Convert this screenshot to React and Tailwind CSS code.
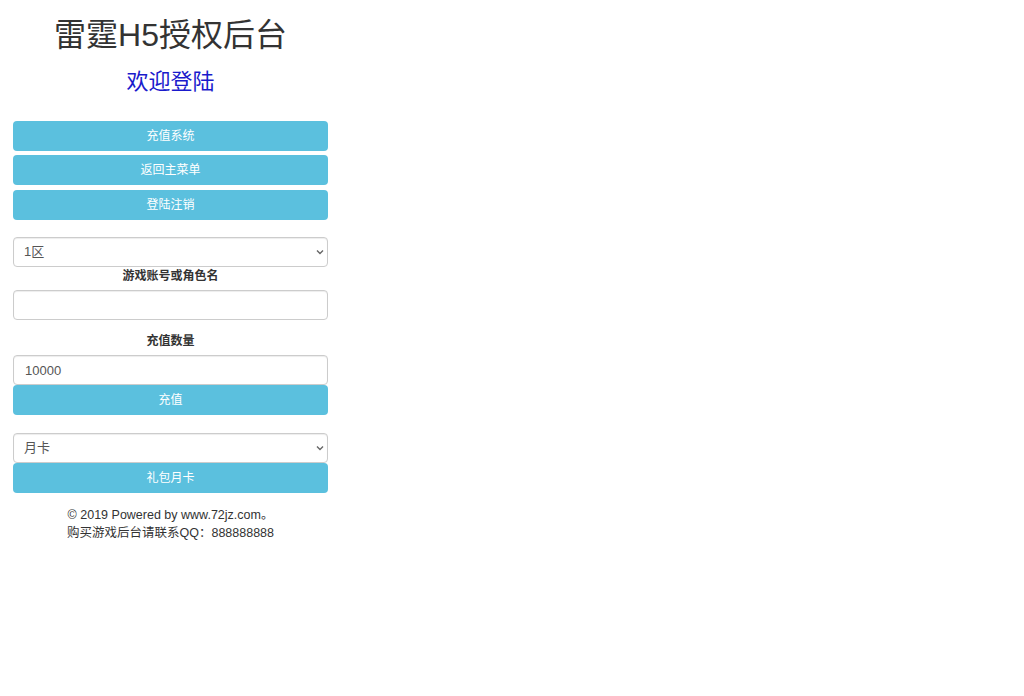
import React from 'react';

const font = { fontFamily: '"Liberation Sans", "Noto Sans CJK SC", sans-serif' };

function Btn({ children, className = '' }) {
  return (
    <button
      type="button"
      className={`block w-full h-[30px] rounded-[4px] bg-[#5bc0de] text-white text-[12px] leading-[30px] text-center ${className}`}
    >
      {children}
    </button>
  );
}

function Select({ value, options, className = '' }) {
  return (
    <div className={`relative ${className}`}>
      <select
        defaultValue={value}
        className="block w-full h-[30px] appearance-none rounded-[4px] border border-[#ccc] bg-white pl-[10px] pr-6 text-[13px] text-[#555] shadow-[inset_0_1px_1px_rgba(0,0,0,0.075)] outline-none"
      >
        {options.map((o) => (
          <option key={o}>{o}</option>
        ))}
      </select>
      <svg
        className="pointer-events-none absolute right-[4px] top-[12px] w-[8px] h-[6px]"
        viewBox="0 0 8 6"
        fill="none"
        stroke="#666"
        strokeWidth="1.4"
      >
        <path d="M1 1.5l3 3 3-3" />
      </svg>
    </div>
  );
}

export default function App() {
  return (
    <div className="w-full min-h-[696px] bg-white" style={font}>
      <div className="w-[341px] px-[13px]">
        <h1 className="mt-[15px] text-center text-[32px] leading-[40px] text-[#333]">雷霆H5授权后台</h1>
        <h3 className="mt-[15px] text-center text-[22px] leading-[24px] text-[#1a1acc]">欢迎登陆</h3>

        <div className="mt-[27px]">
          <Btn>充值系统</Btn>
          <Btn className="mt-[4px]">返回主菜单</Btn>
          <Btn className="mt-[5px]">登陆注销</Btn>
        </div>

        <Select value="1区" options={['1区', '2区', '3区']} className="mt-[17px]" />
        <div className="text-center text-[12px] leading-[18px] font-bold text-[#333]">游戏账号或角色名</div>
        <input
          type="text"
          className="mt-[5px] block w-full h-[30px] rounded-[4px] border border-[#ccc] px-[10px] text-[13px] text-[#555] shadow-[inset_0_1px_1px_rgba(0,0,0,0.075)] outline-none"
        />

        <div className="mt-[12px] text-center text-[12px] leading-[18px] font-bold text-[#333]">充值数量</div>
        <input
          type="text"
          defaultValue="10000"
          className="mt-[5px] block w-full h-[30px] rounded-[4px] border border-[#ccc] px-[11px] text-[13px] text-[#555] shadow-[inset_0_1px_1px_rgba(0,0,0,0.075)] outline-none"
        />
        <Btn>充值</Btn>

        <Select value="月卡" options={['月卡', '周卡']} className="mt-[18px]" />
        <Btn>礼包月卡</Btn>

        <div className="mt-[13px] text-center text-[12.5px] leading-[18px] text-[#333]">
          <p>© 2019 Powered by www.72jz.com。</p>
          <p>购买游戏后台请联系QQ：888888888</p>
        </div>
      </div>
    </div>
  );
}
